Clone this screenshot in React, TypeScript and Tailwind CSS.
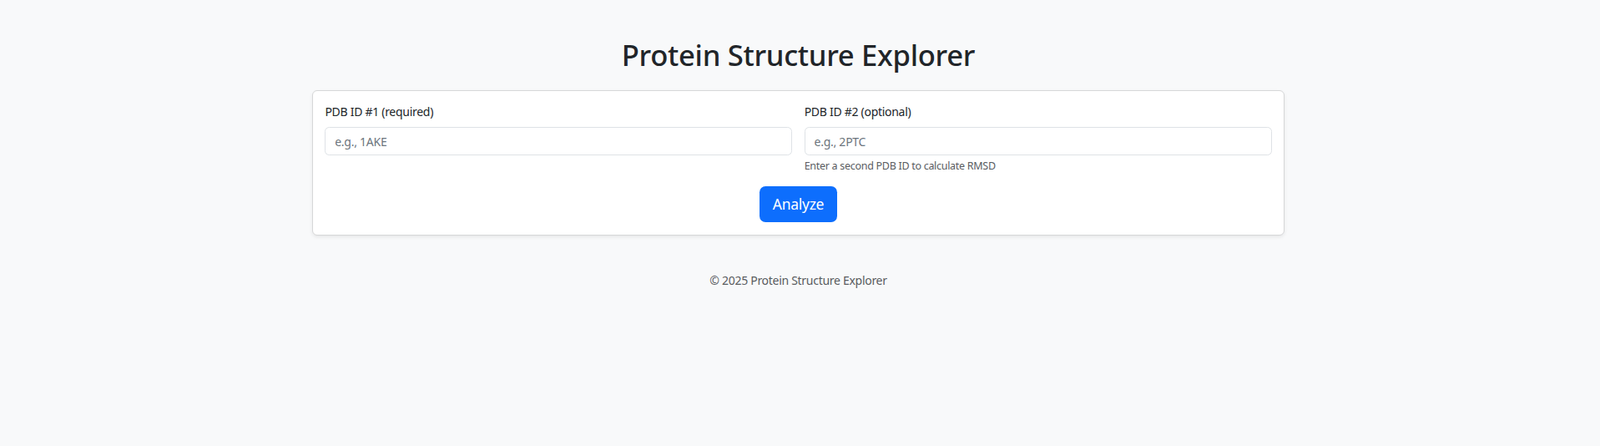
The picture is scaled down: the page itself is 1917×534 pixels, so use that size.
import React from 'react'

const FONT = "font-['Segoe_UI','Noto_Sans',sans-serif]"

const App: React.FC = () => {
    return (
        <div className={`min-h-screen bg-[#f8f9fa] text-[#212529] ${FONT} tracking-[-0.018em]`}>
            <div className="mx-auto w-[1169px] pr-[4px] pt-[44px]">
                <h1 className="text-center text-[34.6px] leading-[43px] font-medium mb-[21px]">
                    Protein Structure Explorer
                </h1>

                <div className="bg-white border border-[#d6d7d8] rounded-[6px] shadow-[0_2px_4px_rgba(0,0,0,0.075)] p-[14.4px]">
                    <form className="w-full" onSubmit={(e) => e.preventDefault()}>
                        <div className="grid grid-cols-2 gap-x-[14.4px]">
                            <div>
                                <label className="block text-[14px] leading-[21.6px] mb-[7.2px]">
                                    PDB ID #1 (required)
                                </label>
                                <input
                                    type="text"
                                    placeholder="e.g., 1AKE"
                                    className="block w-full h-[34.2px] px-[10.8px] text-[14px] tracking-[-0.018em] border border-[#dee2e6] rounded-[5.4px] bg-white placeholder:text-[#6c757d] outline-none"
                                />
                            </div>
                            <div>
                                <label className="block text-[14px] leading-[21.6px] mb-[7.2px]">
                                    PDB ID #2 (optional)
                                </label>
                                <input
                                    type="text"
                                    placeholder="e.g., 2PTC"
                                    className="block w-full h-[34.2px] px-[10.8px] text-[14px] tracking-[-0.018em] border border-[#dee2e6] rounded-[5.4px] bg-white placeholder:text-[#6c757d] outline-none"
                                />
                                <div className="mt-[3.6px] text-[12.5px] leading-[18.9px] text-[#595c5f]">
                                    Enter a second PDB ID to calculate RMSD
                                </div>
                            </div>
                        </div>

                        <div className="flex justify-center mt-[14.4px]">
                            <button
                                type="submit"
                                className="h-[43.2px] px-[16px] text-[17.5px] leading-[27px] text-white bg-[#0d6efd] rounded-[7.2px]"
                            >
                                Analyze
                            </button>
                        </div>
                    </form>
                </div>

                <footer className="mt-[43.2px] text-center text-[14px] leading-[21.6px] text-[#595c5f]">
                    © 2025 Protein Structure Explorer
                </footer>
            </div>
        </div>
    )
}

export default App
